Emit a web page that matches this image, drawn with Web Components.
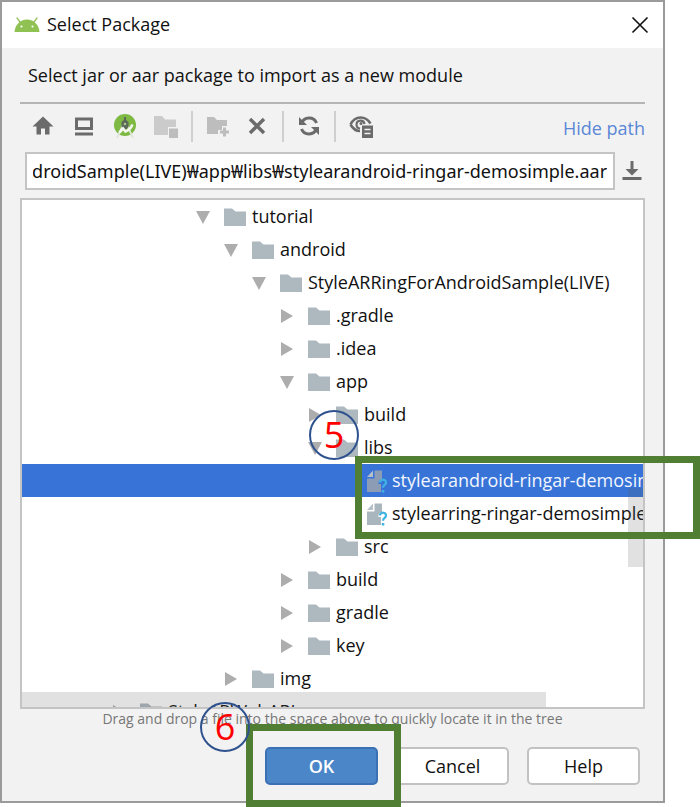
<!DOCTYPE html>
<html lang="en">
<head>
<meta charset="utf-8">
<title>Select Package</title>
<style>
  body { margin: 0; background: #fff; color: #111; font: 18px/24px "Open Sans", "Noto Sans CJK KR", sans-serif; }
</style>
</head>
<body>
<tutorial-page>
  <package-dialog heading="Select Package" message="Select jar or aar package to import as a new module">
    <chooser-toolbar></chooser-toolbar>
    <path-field value="ndroidSample(LIVE)₩app₩libs₩stylearandroid-ringar-demosimple.aar"></path-field>
    <file-tree>
      <tree-row depth="3" state="open">tutorial</tree-row>
      <tree-row depth="4" state="open">android</tree-row>
      <tree-row depth="5" state="open">StyleARRingForAndroidSample(LIVE)</tree-row>
      <tree-row depth="6" state="closed">.gradle</tree-row>
      <tree-row depth="6" state="closed">.idea</tree-row>
      <tree-row depth="6" state="open">app</tree-row>
      <tree-row depth="7" state="closed">build</tree-row>
      <tree-row depth="7" state="open">libs</tree-row>
      <tree-row depth="8" state="file" selected>stylearandroid-ringar-demosimple.aar</tree-row>
      <tree-row depth="8" state="file">stylearring-ringar-demosimple</tree-row>
      <tree-row depth="7" state="closed">src</tree-row>
      <tree-row depth="6" state="closed">build</tree-row>
      <tree-row depth="6" state="closed">gradle</tree-row>
      <tree-row depth="6" state="closed">key</tree-row>
      <tree-row depth="4" state="closed">img</tree-row>
      <tree-row depth="0" state="closed">StyleARWebAPI</tree-row>
    </file-tree>
    <span slot="hint">Drag and drop a file into the space above to quickly locate it in the tree</span>
    <dialog-button slot="actions" primary>OK</dialog-button>
    <dialog-button slot="actions">Cancel</dialog-button>
    <dialog-button slot="actions">Help</dialog-button>
  </package-dialog>
  <highlight-box slot="notes" style="left:355px;top:456px;width:345px;height:83px"></highlight-box>
  <highlight-box slot="notes" style="left:246px;top:724px;width:155px;height:83px"></highlight-box>
  <step-marker slot="notes" style="left:309px;top:410px">5</step-marker>
  <step-marker slot="notes" style="left:200px;top:702px">6</step-marker>
</tutorial-page>

<script>
const icons = {
  android: ['0 0 26 16', '<path d="M3 1l3 4M23 1l-3 4" stroke="#97c05c" stroke-width="1.3" stroke-linecap="round"/><path d="M0.5 15C1 8 6 2.5 13 2.5C20 2.5 25 8 25.5 15z" fill="#8fc253"/><circle cx="7.5" cy="9.5" r="1.1" fill="#fff"/><circle cx="18.5" cy="9.5" r="1.1" fill="#fff"/>'],
  close: ['0 0 18 18', '<path d="M1.5 1.5l15 15M16.5 1.5l-15 15" stroke="#111" stroke-width="1.6" fill="none"/>'],
  home: ['0 0 24 24', '<path d="M12 2.500L1.500 12.500H5.500V20.500H10V14.500H14V20.500H18.500V12.500H22.500z" fill="#6b6b6b"/>'],
  desktop: ['0 0 24 24', '<path d="M4.500 5h15v9.500h-15z" fill="none" stroke="#6b6b6b" stroke-width="3"/><path d="M3 18.500h18v3H3z" fill="#6b6b6b"/>'],
  studio: ['0 0 24 24', '<circle cx="12" cy="11" r="11" fill="#7db943"/><path d="M10 11L4 24M14 11l6 13" stroke="#dfe6d8" stroke-width="1.8"/><path d="M12 3v3" stroke="#5d6957" stroke-width="2"/><path d="M12 5l3.500 3v5L13 15.500h-2L8.500 13V8z" fill="#5d6957"/><circle cx="12" cy="10" r="1.300" fill="#a9c491"/><path d="M6 18.500c2-1 3-3 4-4l2.500 3c3-1 5.500-3.500 7-7" fill="none" stroke="#f4f7f1" stroke-width="2.600"/>'],
  module: ['0 0 24 24', '<path d="M0 2h8l3 3.500h11V13h-8v8H0z" fill="#cbcbcb"/><path d="M15 14.500h9V24h-9z" fill="#bdbdbd"/>'],
  newfolder: ['0 0 24 24', '<path d="M1 3h7l3 3h10v6h-5v4h-4v4H1z" fill="#bdbdbd"/><path d="M18.500 13.500v9M14 18h9" stroke="#bdbdbd" stroke-width="3"/>'],
  remove: ['0 0 24 24', '<path d="M5 5l14 14M19 5L5 19" stroke="#6b6b6b" stroke-width="3.400"/>'],
  refresh: ['0 0 24 24', '<path d="M4.500 9.500A8 8 0 0 1 19.500 9M19.500 14.500A8 8 0 0 1 4.500 15" fill="none" stroke="#6b6b6b" stroke-width="3"/><path d="M2 3v8h8zM22 21v-8h-8z" fill="#6b6b6b"/>'],
  eye: ['0 0 24 24', '<path d="M1.500 10.500C4 5.500 7.500 3.500 11.500 3.500S19 5.500 21.500 9.500M1.500 10.500C4 15 7 17 11 17" fill="none" stroke="#6b6b6b" stroke-width="2.600"/><path d="M15.500 10A4 4 0 1 0 11 14.500" fill="none" stroke="#6b6b6b" stroke-width="2.200"/><circle cx="12" cy="9.500" r="1.500" fill="#6b6b6b"/><path d="M13 11.500h11V24H13z" fill="#6b6b6b"/><path d="M15.500 15.500h6M15.500 19.500h6" stroke="#f2f2f2" stroke-width="1.600"/>'],
  download: ['0 0 20 20', '<path d="M8.500 0h3v8h5L10 14.500 3.500 8h5z" fill="#6b6b6b"/><path d="M0.500 16h19v3h-19z" fill="#6b6b6b"/>'],
  open: ['0 0 14 14', '<path d="M0 1h14L7 14z" fill="#adadad"/>'],
  closed: ['0 0 14 14', '<path d="M1 0v14l12-7z" fill="#adadad"/>'],
  folder: ['0 0 22 18', '<path d="M0 0.500h8l3.500 3H22V18H0z" fill="currentColor"/>'],
  file: ['0 0 22 24', '<path d="M7 1.500V8H1z" fill="#b6c0c6"/><path d="M8.500 1.500H16V10c-3 1-4 3-3.500 5h2.500v8H1V9.500h7.500z" fill="var(--file,#a9b6be)"/><path d="M14 13.500c0-4 6.500-3.500 6 .3-.3 2.200-3 2-3 5" fill="none" stroke="#3fb3e2" stroke-width="2.200"/><path d="M15.800 21h2.500v2.500h-2.500z" fill="#3fb3e2"/>']
};

function define(name, template, setup) {
  customElements.define(name, class extends HTMLElement {
    constructor() {
      super();
      this.attachShadow({ mode: 'open' });
    }
    connectedCallback() {
      this.shadowRoot.innerHTML = template(this);
      if (setup) setup(this.shadowRoot, this);
    }
  });
}

define('ui-icon', el => {
  const [box, art] = icons[el.getAttribute('name')];
  const [, , w, h] = box.split(' ');
  return `<style>:host{display:block;flex:none}svg{display:block}</style>
    <svg width="${w}" height="${h}" viewBox="${box}" fill="none" aria-hidden="true">${art}</svg>`;
});

define('tutorial-page', () => `
  <style>
    :host { display: block; position: relative; padding: 0 35px 4px 0; }
  </style>
  <slot></slot><slot name="notes"></slot>`);

define('highlight-box', () => `
  <style>:host { position: absolute; box-sizing: border-box; border: 7px solid #507e32; pointer-events: none; }</style>`);

define('step-marker', () => `
  <style>
    :host { position: absolute; box-sizing: border-box; width: 50px; height: 50px; border: 2px solid #2f528f;
      border-radius: 50%; display: grid; place-items: center; color: #f00; font-size: 36px; line-height: 46px; pointer-events: none; }
  </style><slot></slot>`);

define('package-dialog', el => `
  <style>
    :host { display: block; background: #f2f2f2; border: 2px solid #9b9b9b; }
    header { display: flex; align-items: center; gap: 7px; height: 46px; padding: 0 14px 0 12px; background: #fff; }
    h1 { flex: 1; margin: 0; padding-bottom: 2px; font: inherit; }
    button { border: 0; padding: 0; background: none; }
    main { padding: 0 18px; }
    p { margin: 0; padding: 15px 8px; border-bottom: 2px solid #b5b5b5; }
    .hint { font-size: 14px; line-height: 20px; text-align: center; color: #777; }
    footer { display: flex; justify-content: flex-end; gap: 18px; padding: 18px 23px 16px; }
  </style>
  <header><ui-icon name="android"></ui-icon><h1>${el.getAttribute('heading')}</h1>
    <button aria-label="Close"><ui-icon name="close"></ui-icon></button></header>
  <main><p>${el.getAttribute('message')}</p><slot></slot><div class="hint"><slot name="hint"></slot></div></main>
  <footer><slot name="actions"></slot></footer>`);

define('chooser-toolbar', () => {
  const button = (name, label, off) => `<button aria-label="${label}"${off ? ' disabled' : ''}><ui-icon name="${name}"></ui-icon></button>`;
  return `
  <style>
    :host { display: flex; align-items: center; box-sizing: border-box; height: 48px; padding: 0 0 4px 11px; }
    div { display: flex; gap: 17px; }
    .edit { gap: 15px; }
    button { border: 0; padding: 0; background: none; }
    i { width: 2px; height: 31px; margin: 0 13px; background: #cfcfcf; }
    a { margin-left: auto; padding-top: 4px; color: #5a87d6; text-decoration: none; }
  </style>
  <div>${button('home', 'Home')}${button('desktop', 'Desktop')}${button('studio', 'Project')}${button('module', 'Module', 1)}</div><i></i>
  <div class="edit">${button('newfolder', 'New folder', 1)}${button('remove', 'Delete')}</div><i></i>
  ${button('refresh', 'Refresh')}<i></i>${button('eye', 'Show hidden files')}
  <a href="#path">Hide path</a>`;
});

define('path-field', el => `
  <style>
    :host { display: flex; align-items: center; gap: 7px; padding: 0 3px 8px 5px; }
    input { flex: 1; min-width: 0; box-sizing: border-box; height: 38px; margin: 0; padding: 0 6px; border: 2px solid #c4c4c4;
      background: #fff; color: #111; font: 18px "Noto Sans", "Noto Sans CJK KR", sans-serif; outline: 0; border-radius: 0; }
    button { border: 0; padding: 0; background: none; }
  </style>
  <input aria-label="Path" value="${el.getAttribute('value')}">
  <button aria-label="Recent paths"><ui-icon name="download"></ui-icon></button>`,
  root => {
    const input = root.querySelector('input');
    input.scrollLeft = input.scrollWidth;
  });

define('file-tree', () => `
  <style>
    :host { display: block; position: relative; height: 507px; overflow: hidden; border: 2px solid #c4c4c4; background: #fff; }
    .bar { position: absolute; background: rgba(90, 90, 90, .18); }
    .x { left: 0; right: 97px; bottom: 0; height: 15px; }
    .y { right: 0; top: 288px; width: 15px; height: 79px; }
  </style>
  <div role="tree"><slot></slot></div><div class="bar x"></div><div class="bar y"></div>`);

define('tree-row', el => {
  const state = el.getAttribute('state');
  el.setAttribute('role', 'treeitem');
  const art = state === 'file'
    ? '<ui-icon name="file"></ui-icon>'
    : `<ui-icon name="${state}"></ui-icon><ui-icon class="folder" name="folder"></ui-icon>`;
  return `
  <style>
    :host { display: flex; align-items: center; height: 33px; white-space: nowrap;
      padding-left: calc(90px + 28px * ${el.getAttribute('depth')}); }
    :host([state="file"]) { padding-left: 344px; }
    :host([selected]) { background: #3874d8; color: #f2f6fd; --file: #8c9cb4; }
    .folder { margin-left: 14px; color: #adb8bf; }
    span { margin-left: 6px; padding-bottom: 2px; }
    :host([state="file"]) span { margin-left: 4px; }
  </style>${art}<span><slot></slot></span>`;
});

define('dialog-button', () => `
  <style>
    :host { display: block; }
    button { width: 113px; height: 38px; padding: 0; border: 2px solid #c2c2c2; border-radius: 5px; background: #fff; color: #111; font: inherit; }
    :host([primary]) button { background: #4a86c8; border-color: #3b70b5; color: #fff; font-weight: 600; }
  </style><button><slot></slot></button>`);
</script>
</body>
</html>
